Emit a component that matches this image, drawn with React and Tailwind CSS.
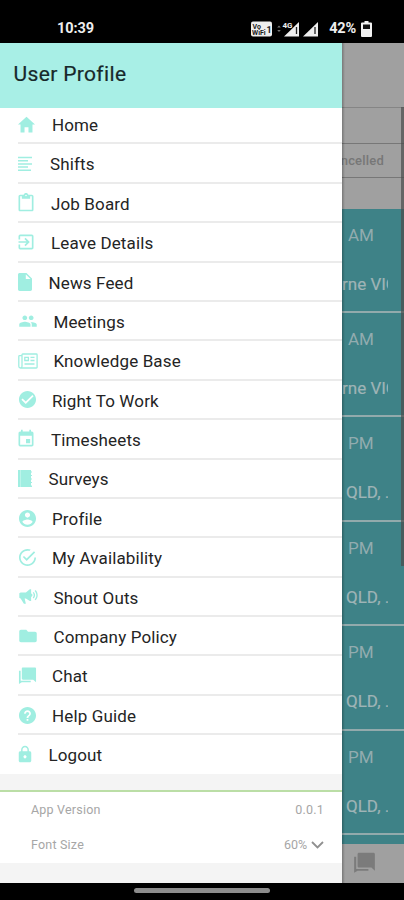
import React from "react";
import {
  IoMdHome, IoMdPeople, IoMdCheckmarkCircle, IoMdContact, IoMdCheckmarkCircleOutline,
  IoMdMegaphone, IoMdFolder, IoMdHelpCircle, IoMdLock,
} from "react-icons/io";
import { MdContentPaste, MdExitToApp, MdEvent } from "react-icons/md";

function Lines() {
  return (
    <svg width="16" height="16" viewBox="0 0 16 16" fill="none" stroke="currentColor" strokeWidth="1.5">
      <path d="M1 1.500h14M1 4.700h10M1 7.900h14M1 11.100h10M1 14.300h13" />
    </svg>
  );
}

function Document() {
  return (
    <svg width="14" height="18" viewBox="0 0 14 18" fill="currentColor">
      <path fillRule="evenodd" d="M1.700 0h6.800L14 5.500v10.800c0 1-.7 1.700-1.700 1.700H1.700C.7 18 0 17.300 0 16.300V1.700C0 .7.700 0 1.700 0zM7.800 1.400V6h4.700z" />
    </svg>
  );
}

function News() {
  return (
    <svg width="20" height="16" viewBox="0 0 20 16" fill="none" stroke="currentColor" strokeWidth="1.300">
      <path d="M4 3V1.700C4 1.200 4.300 1 4.700 1h13.600c.5 0 .8.300.8.800v12.400c0 .5-.3.800-.8.800H2.500C1.500 15 .8 14.300.8 13.300V3.500c0-.5.3-.8.700-.8H4v10.500c0 1-.6 1.800-1.500 1.800" />
      <path d="M6.800 4.300h3.600v3.200H6.800zM12.500 4.300h4M12.500 7.500h4M6.500 11h10" />
    </svg>
  );
}

function Book() {
  return (
    <svg width="14" height="17" viewBox="0 0 14 17" fill="currentColor">
      <path d="M0 0h13v1.500h1v1h-1v2.500h1v1h-1v2.500h1v1h-1V12h1v1h-1v2.500h1v1.500H0z" />
      <path d="M2.500 0v17" stroke="#c9f6ee" strokeWidth=".7" />
    </svg>
  );
}

function Chat({ size }) {
  return (
    <svg width={size} height={size} viewBox="0 0 20 20" fill="currentColor">
      <path d="M5.200 1.500h12.600c.7 0 1.200.5 1.200 1.200v14.500L16 14.400H5.200c-.7 0-1.200-.5-1.200-1.200V2.700c0-.7.5-1.200 1.200-1.200z" />
      <path d="M1 5h1.800v10.600h10.600v1.600H4L1 19z" />
    </svg>
  );
}

const ITEMS = [
  ["Home", IoMdHome, 21, "ml-[52px]", "ml-[16px]"],
  ["Shifts", Lines, 16, "ml-[50px]", "ml-[17px]"],
  ["Job Board", MdContentPaste, 20, "ml-[51px]", "ml-[16px]"],
  ["Leave Details", MdExitToApp, 20, "ml-[51px]", "ml-[16px]"],
  ["News Feed", Document, 18, "ml-[48.500px]", "ml-[18px]"],
  ["Meetings", IoMdPeople, 20, "ml-[53.500px]", "ml-[17.500px]"],
  ["Knowledge Base", News, 20, "ml-[53.500px]", "ml-[18px]"],
  ["Right To Work", IoMdCheckmarkCircle, 21, "ml-[52px]", "ml-[16.500px]"],
  ["Timesheets", MdEvent, 20, "ml-[51px]", "ml-[16px]"],
  ["Surveys", Book, 17, "ml-[48.500px]", "ml-[18px]"],
  ["Profile", IoMdContact, 21, "ml-[52px]", "ml-[16.500px]"],
  ["My Availability", IoMdCheckmarkCircleOutline, 21, "ml-[52px]", "ml-[16.500px]"],
  ["Shout Outs", IoMdMegaphone, 21, "ml-[53.500px]", "ml-[17.500px]"],
  ["Company Policy", IoMdFolder, 20, "ml-[53.500px]", "ml-[17.500px]"],
  ["Chat", Chat, 19, "ml-[52px]", "ml-[17.500px]"],
  ["Help Guide", IoMdHelpCircle, 21, "ml-[52px]", "ml-[16.500px]"],
  ["Logout", IoMdLock, 20, "ml-[48.500px]", "ml-[15px]"],
];

const SHIFTS = [["AM", "rne VIC"], ["AM", "rne VIC"], ["PM", "QLD, ."], ["PM", "QLD, ."], ["PM", "QLD, ."], ["PM", "QLD, ."]];

function StatusBar() {
  return (
    <header className="flex h-[43px] shrink-0 items-center bg-black pt-[14px] pr-[32px] pl-[57px] text-[14.500px] font-bold text-[#eeeeee]">
      <span className="tracking-[-0.1px]">10:39</span>
      <svg className="ml-auto" width="68" height="18" viewBox="0 0 68 18" fill="#eee">
        <rect x="0" y="1.500" width="21" height="15" rx="2" />
        <g fill="#222" fontSize="7" fontWeight="700" fontFamily="Roboto, sans-serif">
          <text x="1.500" y="8.500">Vo</text>
          <text x="1" y="15.300">WiFi</text>
          <text x="15.500" y="12.500" fontSize="9">1</text>
        </g>
        <path d="M28 5.500l1.800 2h-3.600zM28 12l1.800-2h-3.600z" fill="#777" />
        <path d="M48 2v14.500H33z" />
        <path d="M67 2v14.500H52z" />
        <path d="M45.500 7v7M64 7v7" stroke="#222" strokeWidth="1.300" />
        <text x="31.500" y="8" fontSize="8" fontWeight="700" fontFamily="Roboto, sans-serif" stroke="#000" strokeWidth="1.200" paintOrder="stroke">4G</text>
      </svg>
      <span className="ml-[10px] tracking-[-0.2px]">42%</span>
      <svg className="ml-[5px]" width="11" height="16" viewBox="0 0 11 16">
        <path d="M3.500 0h4v1.500H10a1 1 0 011 1V15a1 1 0 01-1 1H1a1 1 0 01-1-1V2.500a1 1 0 011-1h2.500z" fill="#f2f2f2" />
        <path d="M2 3.500h7V8H2z" fill="#111" />
      </svg>
    </header>
  );
}

function Drawer() {
  return (
    <aside className="flex w-[342px] shrink-0 flex-col bg-white">
      <h1 className="flex h-[65px] shrink-0 items-center bg-[#a8efe6] pb-[2px] pl-[13.500px] text-[21px] font-normal tracking-[0.350px] text-[#17282a] [-webkit-text-stroke:0.2px]">
        User Profile
      </h1>
      <nav className="-mt-[3px] h-[669px] shrink-0">
        {ITEMS.map(([label, Icon, size, margin, iconMargin], i) => (
          <div key={label} className="grid h-[39.400px] grid-cols-1 text-[#242424]">
            <div className={"col-start-1 row-start-1 flex items-center pb-[1px] text-[#a0eee1] " + iconMargin}>
              <Icon size={size} />
            </div>
            <span className={"col-start-1 row-start-1 flex items-center pt-[2px] text-[17px] tracking-[0.130px] whitespace-nowrap " + margin}>
              {label}
            </span>
            {i < ITEMS.length - 1 && <span className="col-start-1 row-start-1 ml-[18px] h-[2px] self-end bg-[#ebebeb]" />}
          </div>
        ))}
      </nav>
      <div className="h-[16px] shrink-0 bg-[#f4f4f4]" />
      <section className="h-[73px] shrink-0 border-t-2 border-[#bbdea6] pr-[18px] pl-[31px] text-[12.500px] tracking-[0.200px] text-[#a6a6a6]">
        <div className="flex h-[35px] items-center justify-between pt-[1px]">
          <span>App Version</span>
          <span>0.0.1</span>
        </div>
        <div className="flex h-[36px] items-center">
          <span>Font Size</span>
          <span className="ml-auto tracking-[-0.100px]">60%</span>
          <svg className="ml-[4px]" width="13" height="8" viewBox="0 0 13 8" fill="none" stroke="#909090" strokeWidth="1.800">
            <path d="M1 1l5.500 5.500L12 1" />
          </svg>
        </div>
      </section>
      <div className="flex-1 bg-[#f4f4f4]" />
    </aside>
  );
}

function Backdrop() {
  return (
    <main className="relative flex min-w-0 flex-1 flex-col overflow-hidden bg-[#a0a0a0] whitespace-nowrap">
      <div className="h-[64px] shrink-0" />
      <div className="h-[36px] shrink-0 border-t border-[#858585]" />
      <div className="flex h-[35px] shrink-0 items-center justify-end border-y border-[#777777] pr-[20px] text-[13px] font-medium tracking-[0.200px] text-[#777777]">
        Cancelled
      </div>
      <div className="h-[31px] shrink-0" />
      <div className="h-[635px] shrink-0 bg-[#3e8287] text-[#9fb4b6]">
        {SHIFTS.map(([time, place], i) => (
          <div key={i} className={"flex flex-col border-b-2 border-[#92aaac] " + (i === 0 ? "h-[103.700px]" : "h-[104.500px]")}>
            <span className="mt-[14px] ml-[6px] text-[17px] leading-[24px] text-[#92acaf]">{time}</span>
            <span className={"mt-[25px] w-[46px] overflow-hidden text-[17px] leading-[24px] [-webkit-text-stroke:0.2px] " + (i < 2 ? "" : "pl-[4px]")}>{place}</span>
          </div>
        ))}
      </div>
      <div className="flex flex-1 items-center pb-[2px] pl-[11px] text-[#7b7b7b]">
        <Chat size={23} />
      </div>
      <div className="absolute inset-y-0 left-0 w-[3px] bg-gradient-to-r from-black/25 to-transparent" />
      <div className="absolute top-[64px] right-0 h-[459px] w-[3px] bg-[#4c4c4c]/70" />
    </main>
  );
}

export default function App() {
  return (
    <div className="flex h-[900px] w-[404px] flex-col overflow-hidden bg-black font-[Roboto,sans-serif]">
      <StatusBar />
      <div className="flex h-[840px] shrink-0">
        <Drawer />
        <Backdrop />
      </div>
      <footer className="flex flex-1 justify-center pt-[5px]">
        <div className="h-[5px] w-[136px] rounded-full bg-[#8c8c8c]" />
      </footer>
    </div>
  );
}
